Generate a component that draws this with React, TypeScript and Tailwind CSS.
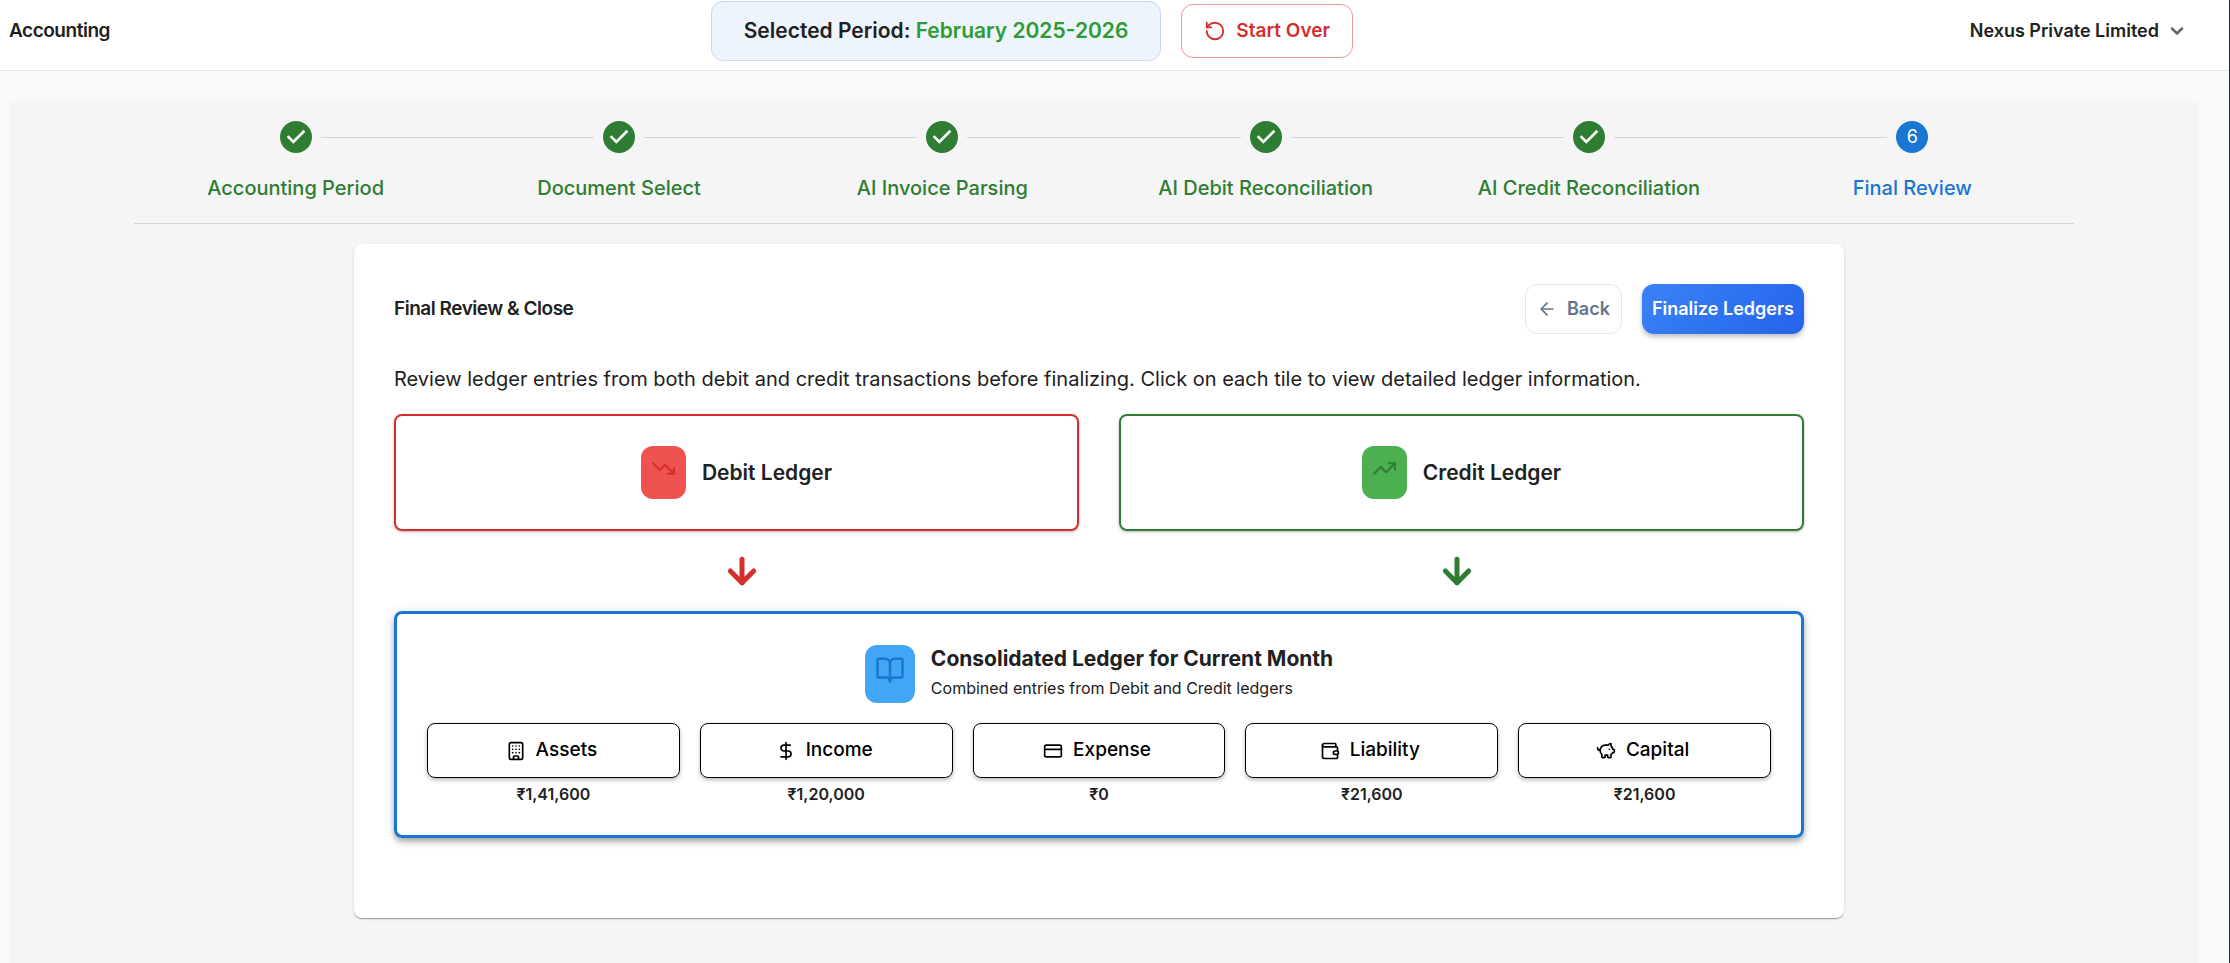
import React from 'react';
import {
  ArrowDown,
  ArrowLeft,
  BookOpen,
  Building,
  ChevronDown,
  CreditCard,
  DollarSign,
  PiggyBank,
  RotateCcw,
  TrendingDown,
  TrendingUp,
  Wallet,
  type LucideIcon,
} from 'lucide-react';
import { clsx } from 'clsx';

interface LedgerAccount {
  label: string;
  amount: string;
  icon: LucideIcon;
}

const steps = [
  'Accounting Period',
  'Document Select',
  'AI Invoice Parsing',
  'AI Debit Reconciliation',
  'AI Credit Reconciliation',
  'Final Review',
];

const accounts: LedgerAccount[] = [
  { label: 'Assets', amount: '₹1,41,600', icon: Building },
  { label: 'Income', amount: '₹1,20,000', icon: DollarSign },
  { label: 'Expense', amount: '₹0', icon: CreditCard },
  { label: 'Liability', amount: '₹21,600', icon: Wallet },
  { label: 'Capital', amount: '₹21,600', icon: PiggyBank },
];

const Header: React.FC = () => (
  <header className="flex h-[71px] items-start justify-between border-b border-slate-200 bg-white pr-[26px] pl-[9px]">
    <h1 className="flex h-[62px] items-center text-[19px] font-semibold tracking-tight">Accounting</h1>
    <div className="flex h-[62px] items-center gap-5">
      <div className="flex h-15 items-center rounded-xl border border-[#c5daf1] bg-[#edf4fc] px-8 text-[21px] font-semibold">
        <p>
          Selected Period: <span className="text-[#2e9b34]">February 2025-2026</span>
        </p>
      </div>
      <button
        type="button"
        className="flex h-[54px] items-center gap-[10px] rounded-xl border border-[#e99797] px-[22px] text-[19px] font-semibold text-[#d32f2f]"
      >
        <RotateCcw className="size-[22px]" />
        Start Over
      </button>
    </div>
    <button type="button" className="flex h-[62px] items-center gap-2 px-4 text-lg font-semibold">
      Nexus Private Limited
      <ChevronDown className="size-5 text-[#666]" strokeWidth={3} />
    </button>
  </header>
);

const StepDoneIcon: React.FC = () => (
  <svg viewBox="0 0 24 24" className="size-8 fill-[#2e7d32]" aria-hidden="true">
    <path d="M12 0a12 12 0 1 0 0 24 12 12 0 0 0 0-24zm-2 17l-5-5 1.4-1.4 3.6 3.6 7.6-7.6L19 8l-9 9z" />
  </svg>
);

const Stepper: React.FC<{ current: number }> = ({ current }) => (
  <ol className="grid grid-cols-6 border-b border-[#d5d5d5] pt-5 pb-[21px]">
    {steps.map((step, index) => {
      const done = index < current;
      return (
        <li key={step} className="flex flex-col items-center">
          <div className="flex w-full items-center gap-[9px]">
            <span className={clsx('h-px flex-1', index > 0 && 'bg-[#d5d5d5]')} />
            {done ? (
              <span className="rounded-full bg-white">
                <StepDoneIcon />
              </span>
            ) : (
              <span className="flex size-8 items-center justify-center rounded-full bg-[#1976d2] text-lg text-white">
                {index + 1}
              </span>
            )}
            <span className={clsx('h-px flex-1', index < steps.length - 1 && 'bg-[#d5d5d5]')} />
          </div>
          <span
            className={clsx('mt-[21px] text-xl leading-7 font-medium', done ? 'text-[#2e7d32]' : 'text-[#1976d2]')}
          >
            {step}
          </span>
        </li>
      );
    })}
  </ol>
);

const App: React.FC = () => {
  return (
    <div className="flex min-h-screen flex-col border-r border-slate-800 bg-slate-50 font-[Inter,sans-serif] text-[#212121]">
      <Header />
      <main className="mt-[30px] mr-[30px] ml-[9px] flex-1 bg-[#f5f5f5] px-[125px] pb-11">
        <Stepper current={5} />

        <div className="pr-[10px]">
          <section className="mx-auto mt-5 max-w-[1490px] rounded-lg bg-white px-10 pt-10 pb-20 shadow-[0_2px_1px_-1px_rgba(0,0,0,0.2),0_1px_1px_0_rgba(0,0,0,0.14),0_1px_3px_0_rgba(0,0,0,0.12)]">
            <div className="flex items-center justify-between">
              <h2 className="text-[19px] font-semibold tracking-tight">Final Review &amp; Close</h2>
              <div className="flex gap-5">
                <button
                  type="button"
                  className="flex h-[50px] items-center gap-[10px] rounded-xl border border-slate-200 px-[11px] text-lg font-semibold text-slate-500"
                >
                  <ArrowLeft className="size-5" />
                  Back
                </button>
                <button
                  type="button"
                  className="h-[50px] rounded-xl bg-linear-135 from-[#3b82f6] to-[#2563eb] px-[10px] text-lg font-semibold text-white shadow-[0_3px_5px_0_rgba(0,0,0,0.25)]"
                >
                  Finalize Ledgers
                </button>
              </div>
            </div>

            <p className="mt-[30px] text-xl leading-[30px]">
              Review ledger entries from both debit and credit transactions before finalizing. Click on each tile to
              view detailed ledger information.
            </p>

            {/* Source ledgers */}
            <div className="mt-5 grid grid-cols-2 gap-10">
              <button
                type="button"
                className="flex h-[117px] items-center justify-center gap-4 rounded-lg border-2 border-[#d32f2f] text-[21px] font-semibold shadow-[0_1px_3px_0_rgba(0,0,0,0.3)]"
              >
                <span className="flex h-[53px] w-[45px] justify-center rounded-xl bg-[#ef5350] pt-[10px]">
                  <TrendingDown className="size-[25px] text-[#d32f2f]" />
                </span>
                Debit Ledger
              </button>
              <button
                type="button"
                className="flex h-[117px] items-center justify-center gap-4 rounded-lg border-2 border-[#2e7d32] text-[21px] font-semibold shadow-[0_1px_3px_0_rgba(0,0,0,0.3)]"
              >
                <span className="flex h-[53px] w-[45px] justify-center rounded-xl bg-[#4caf50] pt-[10px]">
                  <TrendingUp className="size-[25px] text-[#2e7d32]" />
                </span>
                Credit Ledger
              </button>
            </div>

            <div className="-mx-[10px] flex h-20 items-center justify-around">
              <div className="flex flex-1 justify-center">
                <ArrowDown className="size-10 text-[#d32f2f]" strokeWidth={3} />
              </div>
              <div className="flex flex-1 justify-center">
                <ArrowDown className="size-10 text-[#2e7d32]" strokeWidth={3} />
              </div>
            </div>

            {/* Consolidated ledger */}
            <div className="rounded-lg border-3 border-[#1976d2] px-[30px] pt-[31px] pb-[29px] shadow-[0_3px_5px_-1px_rgba(0,0,0,0.2),0_5px_6px_0_rgba(0,0,0,0.14),0_1px_12px_0_rgba(0,0,0,0.12)]">
              <div className="flex items-center justify-center gap-4">
                <span className="flex h-[58px] w-[50px] justify-center rounded-xl bg-[#42a5f5] pt-[10px]">
                  <BookOpen className="size-[30px] text-[#1976d2]" />
                </span>
                <div>
                  <h3 className="text-[21px] leading-7 font-bold">Consolidated Ledger for Current Month</h3>
                  <p className="text-base leading-[30px]">Combined entries from Debit and Credit ledgers</p>
                </div>
              </div>

              <div className="mt-5 grid grid-cols-5 gap-5">
                {accounts.map(({ label, amount, icon: Icon }) => (
                  <div key={label} className="text-center">
                    <button
                      type="button"
                      className="flex h-[55px] w-full items-center justify-center gap-[10px] rounded-lg border border-black text-[19px] font-medium text-black shadow-[0_2px_4px_0_rgba(0,0,0,0.28)]"
                    >
                      <Icon className="-ml-1 size-5" />
                      {label}
                    </button>
                    <p className="mt-1 text-base leading-6 font-semibold">{amount}</p>
                  </div>
                ))}
              </div>
            </div>
          </section>
        </div>
      </main>
    </div>
  );
};

export default App;
